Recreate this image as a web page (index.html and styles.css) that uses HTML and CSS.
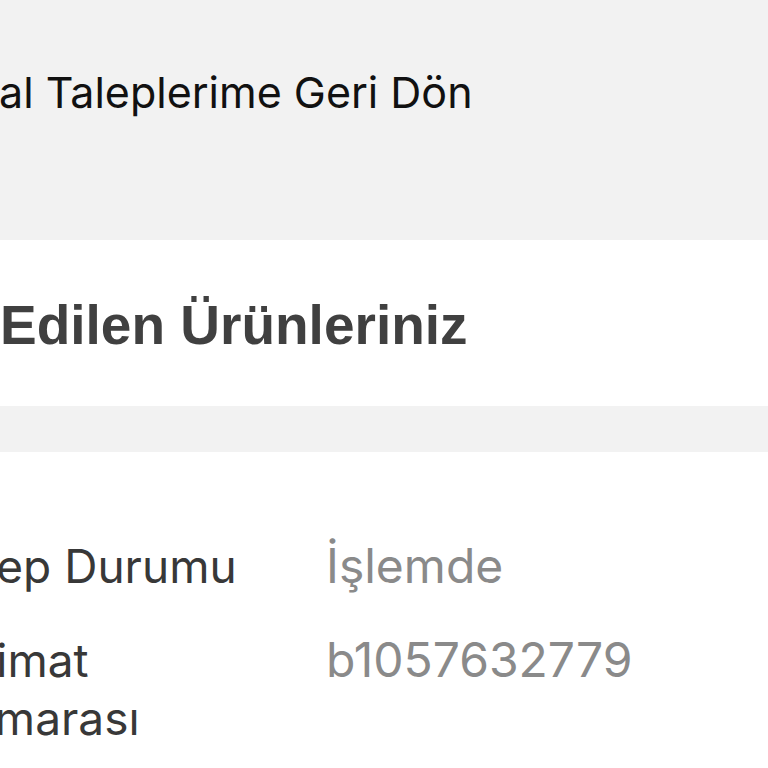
FILE: index.html
```html
<!DOCTYPE html>
<html>
<head>
  <meta charset="utf-8">
  <title>Talep Detayı</title>
  <link rel="stylesheet" href="styles.css">
</head>
<body>
  <div class="page">
    <!-- back link bar -->
    <div class="back-bar">
      <span class="back-link">al Taleplerime Geri Dön</span>
    </div>

    <div class="section-title">
      <h2>Edilen Ürünleriniz</h2>
    </div>

    <div class="spacer"></div>

    <!-- request details -->
    <div class="details">
      <div class="detail-row">
        <div class="detail-label">Talep Durumu</div>
        <div class="detail-value">İşlemde</div>
      </div>
      <div class="detail-row">
        <div class="detail-label">Talimat Numarası</div>
        <div class="detail-value">b1057632779</div>
      </div>
    </div>
  </div>
</body>
</html>
```

FILE: styles.css
```css
html, body {
  margin: 0;
  padding: 0;
  overflow: hidden;
  background-color: #fff;
}
body {
  width: 768px;
  font-family: Inter, "Liberation Sans", Arial, sans-serif;
}
.back-bar {
  height: 240px;
  box-sizing: border-box;
  padding-top: 66px;
  background-color: #f2f2f2;
}
.back-link {
  display: block;
  margin-left: -1px;
  font-size: 43px;
  line-height: 52px;
  color: #111;
  white-space: nowrap;
}
.section-title {
  height: 166px;
  box-sizing: border-box;
  padding-top: 54px;
  background-color: #fff;
}
.section-title h2 {
  margin: 0;
  font-family: "Liberation Sans", Arial, sans-serif;
  font-size: 55px;
  line-height: 63px;
  font-weight: bold;
  color: #404040;
  white-space: nowrap;
}
.spacer {
  height: 46px;
  background-color: #f2f2f2;
}
.details {
  padding-top: 85px;
}
.detail-row {
  display: flex;
  margin-bottom: 36px;
}
.detail-row:last-child {
  margin-bottom: 0;
}
.detail-label {
  width: 320px;
  flex-shrink: 0;
  margin-left: -67px;
  margin-right: 73px;
  font-size: 46px;
  line-height: 58px;
  color: #383838;
}
.detail-value {
  font-size: 48px;
  line-height: 58px;
  color: #8a8a8a;
}
```
